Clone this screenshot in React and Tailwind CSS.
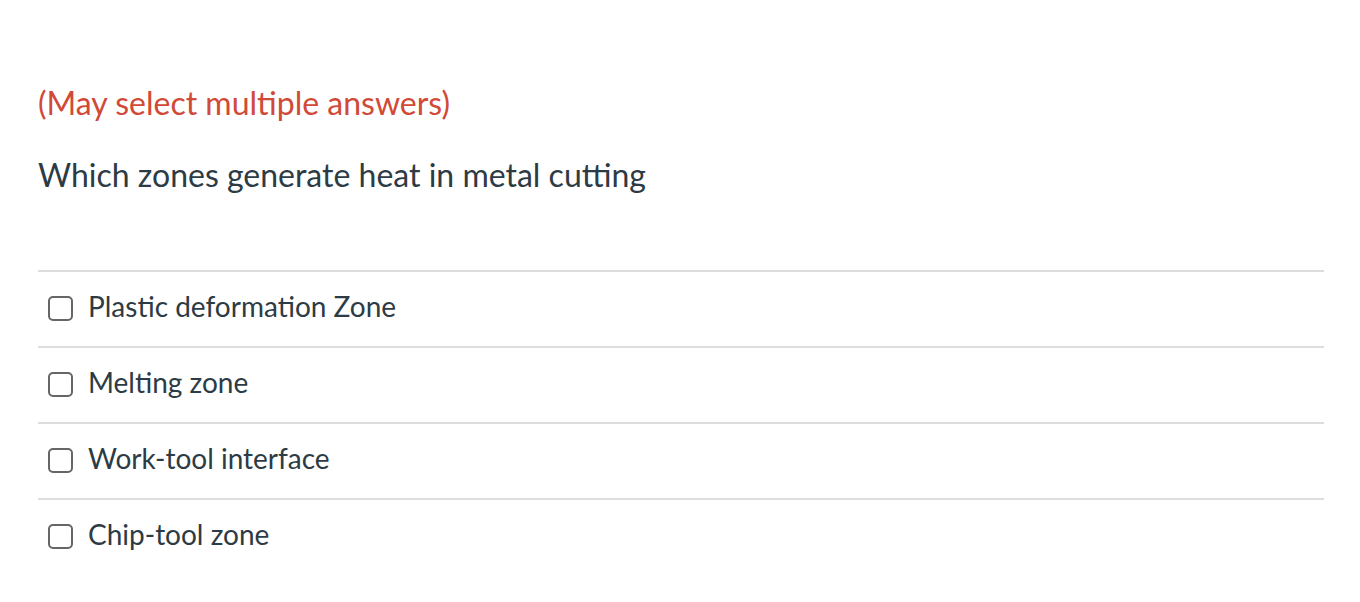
const answers = [
  'Plastic deformation Zone',
  'Melting zone',
  'Work-tool interface',
  'Chip-tool zone',
]

export default function App() {
  return (
    <div className="min-h-screen bg-white pl-[38px] pr-9 pt-[82px] font-['Lato',sans-serif] text-[#2d3b45]">
      <p className="text-[32px] leading-[42px] text-[#d04a37]">
        (May select multiple answers)
      </p>
      <p className="mt-[30px] text-[32px] leading-[42px]">
        Which zones generate heat in metal cutting
      </p>

      <div className="mt-[74px]">
        {answers.map((answer) => (
          <label
            key={answer}
            className="flex h-[76px] items-center gap-[15px] border-t-2 border-[#dddddd] pl-[10px]"
          >
            <span className="-mt-[1px] h-[25px] w-[25px] shrink-0 rounded-[5px] border-2 border-[#666666] bg-white" />
            <span className="-mt-[7px] text-[28px] leading-none">{answer}</span>
          </label>
        ))}
      </div>
    </div>
  )
}
